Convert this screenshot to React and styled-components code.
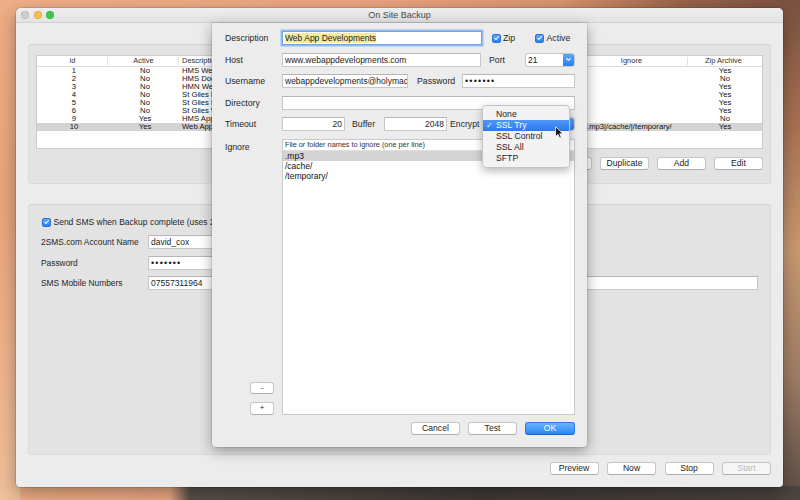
import styled, { createGlobalStyle } from "styled-components";

const GlobalStyle = createGlobalStyle`
  html, body {
    margin: 0;
    padding: 0;
  }
  body {
    width: 800px;
    height: 500px;
    overflow: hidden;
    font-family: "Liberation Sans", Arial, sans-serif;
    color: #222;
    background:
      linear-gradient(90deg, rgba(0, 0, 0, 0) 0 170px, #5a514b 190px, #403a36 60%, #4b4440 100%) left bottom / 100% 14px no-repeat,
      linear-gradient(180deg, #7a5240 0%, #a87252 25%, #c99a72 50%, #a07e66 75%, #5a4c44 100%) right top / 18px 100% no-repeat,
      linear-gradient(180deg, #eeae86 0%, #e9a57c 40%, #f1c09c 100%) left top / 20px 100% no-repeat,
      linear-gradient(90deg, #f0b088 0%, #eaa57f 45%, #d8946e 70%, #9a6448 85%, #7a5040 100%);
  }
`;

const Desktop = styled.div`
  box-sizing: border-box;
  width: 800px;
  height: 500px;
  padding: 8px 17px 13px 16px;
  display: flex;
`;

const Window = styled.div`
  position: relative;
  flex: 1;
  min-width: 0;
  display: flex;
  flex-direction: column;
  background: #ececec;
  border-radius: 5px 5px 4px 4px;
  box-shadow: 0 0 0 0.5px rgba(0, 0, 0, 0.25), 0 6px 18px rgba(0, 0, 0, 0.35);
`;

const TitleBar = styled.div`
  box-sizing: border-box;
  height: 15px;
  padding: 0 5px;
  display: grid;
  grid-template-columns: 1fr auto 1fr;
  align-items: center;
  background: linear-gradient(#eeeeee, #e3e3e3);
  border-bottom: 1px solid #d2d2d2;
  border-radius: 5px 5px 0 0;
`;

const Lights = styled.div`
  display: flex;
  gap: 4.6px;
`;

const Light = styled.span`
  width: 8px;
  height: 8px;
  border-radius: 50%;
  background: ${(p) => p.$color};
  box-shadow: inset 0 0 0 0.5px rgba(0, 0, 0, 0.15);
`;

const Title = styled.div`
  font-size: 9px;
  color: #4a4a4a;
`;

const Content = styled.div`
  flex: 1;
  min-width: 0;
  display: flex;
  flex-direction: column;
  padding: 21px 12px 12px;
`;

const GroupBox = styled.div`
  box-sizing: border-box;
  min-width: 0;
  height: ${(p) => (p.$h ? `${p.$h}px` : "auto")};
  flex: ${(p) => (p.$grow ? 1 : "none")};
  margin-top: ${(p) => p.$mt || 0}px;
  padding: ${(p) => p.$pad};
  display: flex;
  flex-direction: column;
  background: #e3e3e3;
  border: 1px solid #dadada;
  border-top-color: #d3d3d3;
  border-radius: 3px;
`;

const Table = styled.div`
  box-sizing: border-box;
  min-width: 0;
  height: ${(p) => p.$h}px;
  background: #fff;
  border: 1px solid #cbcbcb;
  overflow: hidden;
`;

const TableHead = styled.div`
  display: grid;
  grid-template-columns: ${(p) => p.$cols};
  height: 10px;
  border-bottom: 1px solid #dedede;
`;

const HeadCell = styled.div`
  position: relative;
  min-width: 0;
  padding: 0 3px;
  font-size: 7.5px;
  line-height: 10px;
  color: #333;
  text-align: ${(p) => p.$align};
  white-space: nowrap;
  overflow: hidden;

  &::after {
    content: "";
    position: absolute;
    right: 0;
    top: 1px;
    bottom: 1px;
    width: 1px;
    background: ${(p) => (p.$last ? "transparent" : "#e2e2e2")};
  }
`;

const Row = styled.div`
  display: grid;
  grid-template-columns: ${(p) => p.$cols};
  height: 8px;
  background: ${(p) => (p.$sel ? "#d4d4d4" : "transparent")};
`;

const Cell = styled.div`
  min-width: 0;
  padding: 0 ${(p) => (p.$align === "center" ? 0 : 3)}px 0 ${(p) => p.$pad || 3}px;
  font-size: 7.7px;
  line-height: 8px;
  color: #111;
  text-align: ${(p) => p.$align};
  white-space: nowrap;
  overflow: hidden;
`;

const ButtonRow = styled.div`
  display: flex;
  justify-content: flex-end;
  gap: ${(p) => p.$gap || 8}px;
  margin-top: ${(p) => p.$mt || 0}px;
`;

const Button = styled.button`
  box-sizing: border-box;
  width: ${(p) => p.$w || 49}px;
  height: 13px;
  padding: 0;
  border: 1px solid ${(p) => (p.$primary ? "#2a7ae8" : "#c6c6c6")};
  border-bottom-color: ${(p) => (p.$primary ? "#1a63d0" : "#adadad")};
  border-radius: 3px;
  background: ${(p) =>
    p.$primary
      ? "linear-gradient(#6cb3fb, #2a86f6)"
      : p.$disabled
      ? "#f6f6f6"
      : "#fff"};
  color: ${(p) => (p.$primary ? "#fff" : p.$disabled ? "#bcbcbc" : "#222")};
  font-family: "Liberation Sans", Arial, sans-serif;
  font-size: 8.6px;
  line-height: 11px;
`;

const SmallButton = styled(Button)`
  width: 24px;
  height: 12.5px;
  margin-right: 8px;
  font-size: 8px;
  line-height: 10px;
`;

const CheckBox = styled.span`
  box-sizing: border-box;
  display: inline-flex;
  align-items: center;
  justify-content: center;
  width: 9px;
  height: 9px;
  border-radius: 2px;
  background: linear-gradient(#5ba7fa, #2c80f3);
  border: 0.5px solid #2a72d8;

  svg {
    width: 8px;
    height: 8px;
  }
`;

const CheckItem = styled.div`
  display: flex;
  align-items: center;
  gap: 2.5px;
  margin-left: ${(p) => p.$ml || 0}px;
  font-size: ${(p) => p.$fs || 8.7}px;
  color: #262626;
  white-space: nowrap;
`;

const Tick = () => (
  <CheckBox>
    <svg viewBox="0 0 10 10">
      <path d="M2.4 5.3 L4.3 7.2 L7.8 2.8" fill="none" stroke="#fff" strokeWidth="1.5" strokeLinecap="round" strokeLinejoin="round" />
    </svg>
  </CheckBox>
);

const Field = styled.div`
  box-sizing: border-box;
  flex: ${(p) => (p.$w ? "none" : 1)};
  width: ${(p) => (p.$w ? `${p.$w}px` : "auto")};
  height: 14px;
  padding: 0 2px;
  background: #fff;
  border: 1px solid ${(p) => (p.$focus ? "#6fa4e6" : "#c7c7c7")};
  border-top-color: ${(p) => (p.$focus ? "#6fa4e6" : "#b6b6b6")};
  box-shadow: ${(p) => (p.$focus ? "0 0 0 1.5px #93bdf0" : "none")};
  font-size: 8.5px;
  line-height: 12px;
  color: #1c1c1c;
  text-align: ${(p) => (p.$right ? "right" : "left")};
  white-space: nowrap;
  overflow: hidden;
`;

const Dots = styled.span`
  font-size: 9px;
  letter-spacing: 1.2px;
`;

const Mark = styled.span`
  display: inline-block;
  line-height: 10px;
  background: #f4eb9c;
`;

const SmsGrid = styled.div`
  display: grid;
  grid-template-columns: 107px 1fr;
  row-gap: 6.5px;
  align-items: center;
  margin-top: 8px;
`;

const SmsLabel = styled.div`
  font-size: 8.4px;
  color: #262626;
`;

const Sheet = styled.div`
  position: absolute;
  left: 196px;
  top: 15px;
  width: 375px;
  height: 424px;
  box-sizing: border-box;
  padding: 8px 12px 12px 13px;
  display: flex;
  flex-direction: column;
  gap: 7.5px;
  background: #ececec;
  border-radius: 0 0 4px 4px;
  box-shadow: 0 0 0 0.5px rgba(0, 0, 0, 0.18), 0 4px 14px rgba(0, 0, 0, 0.35);
`;

const FormRow = styled.div`
  display: flex;
  align-items: center;
  height: 14px;
`;

const Label = styled.div`
  flex: none;
  width: ${(p) => p.$w || 57}px;
  margin-left: ${(p) => p.$ml || 0}px;
  font-size: 8.7px;
  color: #262626;
  white-space: nowrap;
`;

const Combo = styled.div`
  box-sizing: border-box;
  flex: 1;
  height: 14px;
  display: flex;
  background: #fff;
  border: 1px solid #c7c7c7;
  border-radius: 3px;
  overflow: hidden;
  font-size: 8.5px;
  line-height: 12px;
`;

const ComboText = styled.div`
  flex: 1;
  padding-left: 2px;
`;

const ComboArrow = styled.div`
  width: 11px;
  display: flex;
  align-items: center;
  justify-content: center;
  background: linear-gradient(#5aa6fa, #2a7ff3);

  svg {
    width: 9px;
    height: 9px;
  }
`;

const IgnoreArea = styled.div`
  flex: 1;
  display: flex;
  min-height: 0;
`;

const IgnoreSide = styled.div`
  width: 57px;
  display: flex;
  flex-direction: column;
  align-items: flex-end;
  gap: 8px;

  ${Label} {
    align-self: flex-start;
    padding-top: 3px;
  }
`;

const Spacer = styled.div`
  flex: 1;
`;

const ListBox = styled.div`
  flex: 1;
  display: flex;
  flex-direction: column;
  background: #fff;
  border: 1px solid #c9c9c9;
`;

const ListHead = styled.div`
  height: 10px;
  padding-left: 2px;
  font-size: 7.3px;
  line-height: 10px;
  color: #333;
  border-bottom: 1px solid #dedede;
`;

const ListRow = styled.div`
  height: 10px;
  padding-left: 2px;
  font-size: 8.5px;
  line-height: 10px;
  color: #111;
  background: ${(p) => (p.$sel ? "#d4d4d4" : "transparent")};
`;

const Menu = styled.div`
  position: absolute;
  left: 270px;
  top: 82px;
  width: 88px;
  box-sizing: border-box;
  padding: 3px 0;
  background: rgba(243, 243, 243, 0.98);
  border: 0.5px solid #c4c4c4;
  border-radius: 4px;
  box-shadow: 0 3px 9px rgba(0, 0, 0, 0.28);
`;

const MenuItem = styled.div`
  position: relative;
  height: 11px;
  padding-left: 13px;
  font-size: 8.7px;
  line-height: 11px;
  color: ${(p) => (p.$on ? "#fff" : "#222")};
  background: ${(p) => (p.$on ? "linear-gradient(#4f97f8, #2c78f1)" : "transparent")};
`;

const MenuCheck = styled.span`
  position: absolute;
  left: 3px;
  top: 0;
  font-family: "DejaVu Sans", sans-serif;
  font-size: 8px;
`;

const Cursor = styled.svg`
  position: absolute;
  left: 343px;
  top: 103px;
  width: 9px;
  height: 13px;
`;

const columns = [
  { label: "id", w: 71, head: "center", body: "center" },
  { label: "Active", w: 71, head: "center", body: "center" },
  { label: "Description", w: 130, head: "left", body: "left" },
  { label: "Host", w: 130, head: "left", body: "left" },
  { label: "Directory", w: 136, head: "left", body: "left" },
  { label: "Ignore", w: 113, head: "center", body: "left", pad: 12 },
  { label: "Zip Archive", w: 71, head: "center", body: "center" },
];

const gridCols = columns.map((c) => `${c.w}px`).join(" ") + " minmax(0, 1fr)";

const backups = [
  ["1", "No", "HMS Website", "", "", "", "Yes"],
  ["2", "No", "HMS Documents", "", "", "", "No"],
  ["3", "No", "HMN Website", "", "", "", "Yes"],
  ["4", "No", "St Giles Dev", "", "", "", "Yes"],
  ["5", "No", "St Giles Main", "", "", "", "Yes"],
  ["6", "No", "St Giles Web", "", "", "", "Yes"],
  ["9", "Yes", "HMS App", "", "", "", "No"],
  ["10", "Yes", "Web App Developments", "www.webappdevelopments.com", "", ".mp3|/cache/|/temporary/", "Yes"],
];

const encryptOptions = ["None", "SSL Try", "SSL Control", "SSL All", "SFTP"];

const App = () => {
  return (
    <>
      <GlobalStyle />
      <Desktop>
        <Window>
          <TitleBar>
            <Lights>
              <Light $color="#cdcdcd" />
              <Light $color="#f6bd4f" />
              <Light $color="#3ec94c" />
            </Lights>
            <Title>On Site Backup</Title>
          </TitleBar>

          <Content>
            <GroupBox $h={140} $pad="10px 7px 0">
              <Table $h={94}>
                <TableHead $cols={gridCols}>
                  {columns.map((c, i) => (
                    <HeadCell key={c.label} $align={c.head} $last={i === columns.length - 1}>
                      {c.label}
                    </HeadCell>
                  ))}
                  <HeadCell $align="left" $last />
                </TableHead>
                {backups.map((row, r) => (
                  <Row key={row[0]} $cols={gridCols} $sel={r === backups.length - 1}>
                    {row.map((value, i) => (
                      <Cell key={i} $align={columns[i].body} $pad={columns[i].pad}>
                        {value}
                      </Cell>
                    ))}
                    <Cell $align="left" />
                  </Row>
                ))}
              </Table>
              <ButtonRow $mt={8}>
                <Button>Remove</Button>
                <Button>Duplicate</Button>
                <Button>Add</Button>
                <Button>Edit</Button>
              </ButtonRow>
            </GroupBox>

            <GroupBox $grow $mt={20} $pad="12px 12px 0 12px">
              <CheckItem $ml={1} $fs={8.5}>
                <Tick />
                Send SMS when Backup complete (uses 2SMS.com account)
              </CheckItem>
              <SmsGrid>
                <SmsLabel>2SMS.com Account Name</SmsLabel>
                <Field $w={200}>david_cox</Field>
                <SmsLabel>Password</SmsLabel>
                <Field $w={200}>
                  <Dots>•••••••</Dots>
                </Field>
                <SmsLabel>SMS Mobile Numbers</SmsLabel>
                <Field>07557311964</Field>
              </SmsGrid>
            </GroupBox>

            <ButtonRow $mt={7} $gap={8.5}>
              <Button>Preview</Button>
              <Button>Now</Button>
              <Button>Stop</Button>
              <Button $disabled>Start</Button>
            </ButtonRow>
          </Content>

          <Sheet>
            <FormRow>
              <Label>Description</Label>
              <Field $w={200} $focus>
                <Mark>Web App Developments</Mark>
              </Field>
              <CheckItem $ml={9.5}>
                <Tick />
                Zip
              </CheckItem>
              <CheckItem $ml={20}>
                <Tick />
                Active
              </CheckItem>
            </FormRow>

            <FormRow>
              <Label>Host</Label>
              <Field $w={199}>www.webappdevelopments.com</Field>
              <Label $w={36} $ml={8}>Port</Label>
              <Combo>
                <ComboText>21</ComboText>
                <ComboArrow>
                  <svg viewBox="0 0 10 10">
                    <path d="M3 4 L5 6 L7 4" fill="none" stroke="#fff" strokeWidth="1.2" strokeLinecap="round" strokeLinejoin="round" />
                  </svg>
                </ComboArrow>
              </Combo>
            </FormRow>

            <FormRow>
              <Label>Username</Label>
              <Field $w={126}>webappdevelopments@holymac.com</Field>
              <Label $w={45} $ml={9}>Password</Label>
              <Field>
                <Dots>•••••••</Dots>
              </Field>
            </FormRow>

            <FormRow>
              <Label>Directory</Label>
              <Field />
            </FormRow>

            <FormRow>
              <Label>Timeout</Label>
              <Field $w={63} $right>20</Field>
              <Label $w={32} $ml={7}>Buffer</Label>
              <Field $w={63} $right>2048</Field>
              <Label $w={32} $ml={3}>Encrypt</Label>
              <Combo>
                <ComboText>SSL Try</ComboText>
                <ComboArrow>
                  <svg viewBox="0 0 10 10">
                    <path d="M3.4 4 L5 2.4 L6.6 4 M3.4 6 L5 7.6 L6.6 6" fill="none" stroke="#fff" strokeWidth="1.1" strokeLinecap="round" strokeLinejoin="round" />
                  </svg>
                </ComboArrow>
              </Combo>
            </FormRow>

            <IgnoreArea>
              <IgnoreSide>
                <Label>Ignore</Label>
                <Spacer />
                <SmallButton>-</SmallButton>
                <SmallButton>+</SmallButton>
              </IgnoreSide>
              <ListBox>
                <ListHead>File or folder names to ignore (one per line)</ListHead>
                <ListRow $sel>.mp3</ListRow>
                <ListRow>/cache/</ListRow>
                <ListRow>/temporary/</ListRow>
              </ListBox>
            </IgnoreArea>

            <ButtonRow>
              <Button>Cancel</Button>
              <Button>Test</Button>
              <Button $w={50} $primary>OK</Button>
            </ButtonRow>

            <Menu>
              {encryptOptions.map((option) => (
                <MenuItem key={option} $on={option === "SSL Try"}>
                  {option === "SSL Try" && <MenuCheck>✓</MenuCheck>}
                  {option}
                </MenuItem>
              ))}
            </Menu>

            <Cursor viewBox="0 0 9 13">
              <path d="M0.6 0.6 L0.6 10.6 L3 8.4 L4.7 12.1 L6.3 11.4 L4.7 7.8 L7.9 7.8 Z" fill="#111" stroke="#fff" strokeWidth="0.8" strokeLinejoin="round" />
            </Cursor>
          </Sheet>
        </Window>
      </Desktop>
    </>
  );
};

export default App;
